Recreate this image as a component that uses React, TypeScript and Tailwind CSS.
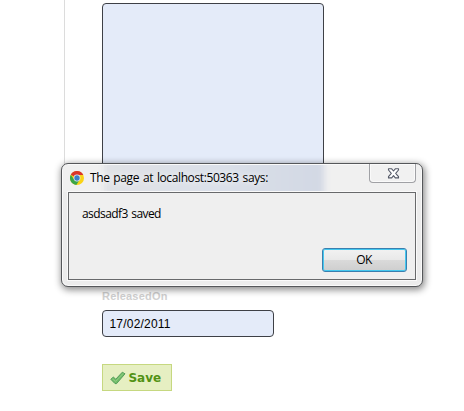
import React from "react";

function ChromeIcon() {
  return (
    <svg width="14" height="14" viewBox=".5 .5 14 14" className="shrink-0">
      <circle cx="7.5" cy="7.5" r="7" fill="#fad315" />
      <path d="M7.5 7.5L1.3 4.2A7 7 0 0 1 13.8 4.5H7.5Z" fill="#d9352b" />
      <path d="M1.3 4.2A7 7 0 0 0 6.8 14.5L10 9.5L4.6 9Z" fill="#3ba548" />
      <circle cx="7.5" cy="7.5" r="3.4" fill="#e6eef5" />
      <circle cx="7.5" cy="7.5" r="2.7" fill="#3b7fc8" />
    </svg>
  );
}

function CloseIcon() {
  return (
    <svg width="13" height="11" viewBox="0 0 13 11">
      <path
        d="M1.5 .8H4.7L6.5 3L8.3 .8H11.5V2L8.7 5.3L11.5 8.7V9.9H8.3L6.5 7.7L4.7 9.9H1.5V8.7L4.3 5.3L1.5 2Z"
        fill="#fff"
        stroke="#555a68"
        strokeWidth="1.1"
        strokeLinejoin="round"
      />
    </svg>
  );
}

function CheckIcon() {
  return (
    <svg width="16" height="14" viewBox="0 0 16 14" className="shrink-0">
      <path
        d="M.8 8.3L3.3 6.1L5.8 8.2L12.3 1.2L15 2.8L6.6 12.6H5Z"
        fill="#72bd68"
        stroke="#4a9653"
        strokeWidth=".9"
        strokeLinejoin="round"
      />
      <path d="M2.4 8L5.7 10.3L13.2 2.4" fill="none" stroke="#8fcb83" strokeWidth="1" />
    </svg>
  );
}

function Dialog() {
  return (
    <div
      role="dialog"
      className="absolute left-[61px] top-[163px] flex h-[124px] w-[362px] flex-col rounded-[7px] border border-[#55575a] bg-[#ececec] px-[6px] pb-[6px] font-['Open_Sans','Noto_Sans',sans-serif] text-[12px] text-black shadow-[inset_0_0_0_1px_#fafafa,1px_2px_7px_1px_rgba(0,0,0,0.45)]"
    >
      <div className="pointer-events-none absolute left-px right-px top-px h-[27px] overflow-hidden rounded-t-[5px] bg-[#f0f0f0]">
        <div className="-mt-2 ml-[41px] h-[43px] w-[220px] bg-linear-to-r from-[#e0e2e6] via-[#dbe0e9] to-[#d2d8e4] blur-[3px]" />
      </div>
      <div className="relative flex h-[28px] shrink-0">
        <div className="flex pl-[2px] pt-[7px]">
          <ChromeIcon />
          <span className="-mt-px ml-[6px] h-4 whitespace-nowrap leading-4 tracking-[-0.39px] [text-shadow:0_0_8px_#fff,0_0_8px_#ffffff99] [word-spacing:1.1px]">
            The page at localhost:50363 says:
          </span>
        </div>
        <button className="ml-auto flex h-[19px] w-[47px] items-center justify-center rounded-b-[4px] border border-t-0 border-[#a0a1a5] bg-[#f1f1f1] pl-px shadow-[inset_0_0_0_1px_#fafafa]">
          <CloseIcon />
        </button>
      </div>
      <div className="relative flex grow flex-col border border-[#68696b] bg-[#efefef] px-[13px] pt-[13px] shadow-[0_0_0_1px_#fafafa]">
        <p className="h-4 leading-4 tracking-[-0.58px] [word-spacing:1px]">asdsadf3 saved</p>
        <button className="-mr-[5px] ml-auto mt-[26px] flex h-[24px] w-[85px] items-center justify-center rounded-[3px] border border-[#3a7faf] bg-[linear-gradient(#f2f2f2,#e9e9e9_48%,#dadada_50%,#cecece)] pr-px tracking-[-0.5px] shadow-[inset_0_0_0_1px_#45c8ef]">
          OK
        </button>
      </div>
    </div>
  );
}

export default function App() {
  return (
    <div className="relative flex h-[411px] w-[464px] overflow-hidden bg-white">
      <div className="ml-16 h-[170px] w-px shrink-0 bg-[#dcdcdc]" />
      <div className="ml-[37px] flex flex-col items-start pt-[3px]">
        <div className="h-[190px] w-[222px] rounded-[4px] border border-[#3e4046] bg-[#e4ebf9]" />
        <label className="mt-[96px] h-[14px] font-['Liberation_Sans',Arial,sans-serif] text-[11px] font-bold leading-[14px] tracking-[0.2px] text-[#d0d0d0]">
          ReleasedOn
        </label>
        <input
          defaultValue="17/02/2011"
          className="mt-[7px] h-[27px] w-[172px] rounded-[4px] border border-[#3e4046] bg-[#e4ebf9] pl-[6.5px] font-['Liberation_Sans',Arial,sans-serif] text-[12px] tracking-[0.2px] text-black outline-none"
        />
        <button className="mt-[27px] flex h-[27px] w-[70px] items-center border border-[#c6d880] bg-[#e6efc2] pl-[7px] font-['DejaVu_Sans',Verdana,sans-serif] text-[12px] font-bold text-[#529214]">
          <CheckIcon />
          <span className="ml-[2.5px] tracking-[-0.05px]">Save</span>
        </button>
      </div>
      <Dialog />
    </div>
  );
}
